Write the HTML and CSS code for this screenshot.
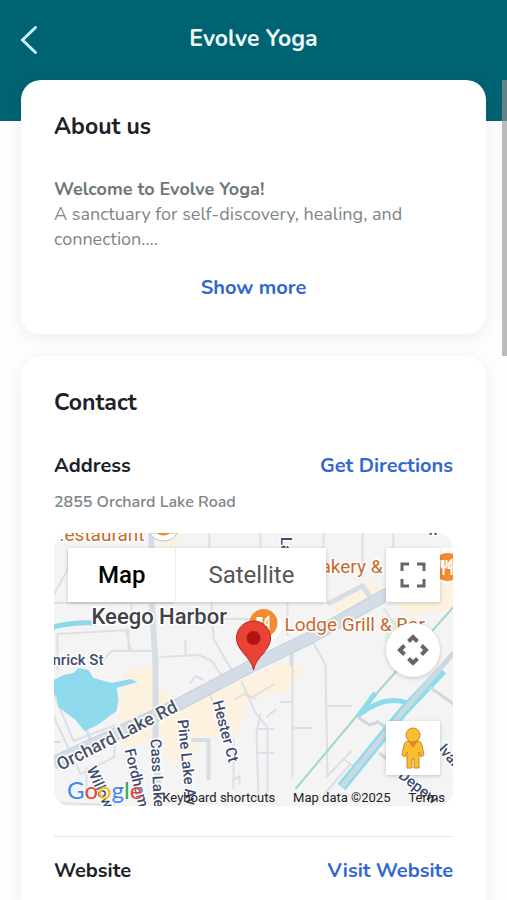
FILE: index.html
```
<!DOCTYPE html>
<html lang="en">
<head>
  <meta charset="UTF-8">
  <meta name="viewport" content="width=device-width, initial-scale=1.0">
  <title>Evolve Yoga</title>
  <link rel="stylesheet" href="styles.css">
</head>
<body>

  <header class="topbar">
    <button class="back" type="button" aria-label="Back">
      <svg width="18" height="30" viewBox="0 0 18 30"><path d="M15.500 2.500 2.500 15l13 12.500"/></svg>
    </button>
    <h1>Evolve Yoga</h1>
  </header>

  <main class="content">
    <section class="card">
      <h2>About us</h2>
      <p class="about"><strong>Welcome to Evolve Yoga!</strong>A sanctuary for self-discovery, healing, and connection....</p>
      <button class="link show-more" type="button">Show more</button>
    </section>

    <section class="card">
      <h2>Contact</h2>
      <div class="row">
        <h3>Address</h3>
        <a class="link" href="#directions">Get Directions</a>
      </div>
      <p class="address">2855 Orchard Lake Road</p>

      <div class="map">
        <svg class="map-art" viewBox="0 0 400 273" preserveAspectRatio="xMidYMid slice">
          <rect width="400" height="273" fill="#f4f4f5"/>

          <!-- commercial areas -->
          <g fill="#fcf2df">
            <path d="M74 136 103 132 100 149 118 165 122 180 75 201 64 186 68 162z"/>
            <path d="M63 190 198 143 227 129 252 134 234 158 195 168 184 202 146 203 140 230 112 228 108 206 70 215z"/>
            <path d="M112 0h14v14h-14zM278 66l41-20 12 14-46 26zM335 45l52-22 13 2v52l-45 6-24-22z"/>
          </g>
          <path d="M335 85h12l-3 20-14 4z" fill="#dcf3e2"/>

          <!-- side streets -->
          <g fill="none" stroke="#dce0e6" stroke-width="2">
            <path d="M15 15v20L0 62M0 70h120M78 15v72M0 183l27 58 34-17v-24M4 137V101l71-4v21H58l-8 9M72 95l5 22M102 118h-44M106 124l40-2 12 6 14 20M132 107v16M158 68l2 38 20 34M160 86h40M156 0v15M207 0v15M234 68v35M270 0v43M309 0v45M340 0v15"/>
            <path d="M0 160l20 48 42-16M0 209h8M33 258v-24M0 270l62 2M136 151l6-8 8 4M181 167l9-6 13 5M188 148l14 32 12 14v76M207 180l-4 20 2 66M205 196h16M205 220h16M199 164l22-13M213 184l10-8M239 120v124M226 169h13M239 195h20M154 155l8 20M140 206h16M180 206v50M180 247l6-4v8"/>
            <path d="M260 110l12 22 2 110M274 173h24M272 245l26-27M290 226l15 11M270 262l26-30M330 75l14 20"/>
          </g>
          <g fill="none" stroke="#d7dde4" stroke-width="6">
            <path d="M98 0v65l4 65v80l4 63"/>
            <path d="M138 207h17v40M238 115v18" stroke-width="4"/>
            <path d="M274 71l35-18 12 17" stroke-width="5"/>
            <path d="M15 152l23 57" stroke-width="3"/>
          </g>

          <!-- Orchard Lake Road -->
          <path d="M0 230 122 173 196 134 256 105 330 63 400 30" fill="none" stroke="#c3cfda" stroke-width="13"/>
          <path d="M0 230 122 173 196 134 256 105 330 63 400 30" fill="none" stroke="#d4dde7" stroke-width="11"/>

          <!-- water -->
          <path d="M0 147 10 142 20 140 25 135 35 137 40 145 58 150 77 146 84 149 63 155 65 166 63 178 44 192 31 198 22 187 5 174 3 164 0 160z" fill="#8fd9ed"/>
          <path d="M0 94q20-5 42-4" fill="none" stroke="#8dd8e8" stroke-width="5"/>
          <path d="M400 74 304 182 242 256" fill="none" stroke="#a6d8bd" stroke-width="2"/>
          <g fill="none" stroke="#8edbeb">
            <path d="M288 254 349 179 389 137" stroke-width="10"/>
            <path d="M304 184l18-24M308 180q24-18 46-10" stroke-width="5"/>
          </g>
          <path d="M288 254 349 179 400 120" fill="none" stroke="#cbd9e3" stroke-width="5"/>
          <path d="M304 184l12 8 8-3 8 5M326 220l14 12M376 154l24 17" fill="none" stroke="#d0d7de" stroke-width="3"/>

          <!-- places -->
          <g class="pin-place">
            <path d="M197 97a16 16 0 1 1 28 5l-13 11-11-11z" fill="#fff"/>
            <circle cx="210" cy="90" r="14" fill="#f58b2e"/>
            <path d="M204 84v5q0 2 2 2t2-2v-5M206 84v13M215 97V84q-4 2-3 8h3" stroke="#fff" stroke-width="2" fill="none"/>
            <path d="M383 45 394 52 400 48V15H386z" fill="#fff"/>
            <circle cx="394" cy="34" r="14" fill="#f58b2e"/>
            <path d="M388 27v6q0 2 2 2t3-2v-6M390 27v15M398 42V27q-3 2-3 8h3" stroke="#fff" stroke-width="2" fill="none"/>
            <path d="M96 0q5 8 14 8t14-8z" fill="#fff" stroke="#b9bec3"/>
            <path d="M103 0q7 5 14 0z" fill="#f58b2e"/>
          </g>

          <g class="label food">
            <text x="6" y="8">.estaurant</text>
            <text x="267" y="40">akery &amp;</text>
            <text x="231" y="98">Lodge Grill &amp; Bar</text>
          </g>
          <text class="label town" x="38" y="91">Keego Harbor</text>
          <text class="label major" transform="translate(7 238) rotate(-27)">Orchard Lake Rd</text>
          <g class="label street">
            <text x="-1" y="132">nrick St</text>
            <text transform="translate(33 236) rotate(66)">Willow</text>
            <text transform="translate(71 217) rotate(76)">Fordham</text>
            <text transform="translate(97 206) rotate(87)">Cass Lake Rd</text>
            <text transform="translate(124 187) rotate(84)">Pine Lake Ave</text>
            <text transform="translate(159 169) rotate(75)">Hester Ct</text>
            <text transform="translate(227 4) rotate(90)">Lake</text>
            <text transform="translate(344 244) rotate(38)">Depew</text>
            <text transform="translate(384 217) rotate(48)">lvania</text>
            <text x="374" y="2">w</text>
          </g>

          <!-- marker -->
          <path d="M200 137C198 124 183 118 183 105a17 17 0 0 1 34 0C217 118 202 124 200 137z" fill="#ea4335" stroke="#b7271f"/>
          <circle cx="200" cy="105" r="7" fill="#b31412"/>
        </svg>

        <div class="map-type">
          <button class="active" type="button">Map</button>
          <button type="button">Satellite</button>
        </div>

        <div class="map-tools">
          <button type="button" aria-label="Toggle fullscreen">
            <svg width="26" height="26" viewBox="0 0 26 26" fill="none" stroke="#666" stroke-width="3"><path d="M2 9V2h7M17 2h7v7M24 17v7h-7M9 24H2v-7"/></svg>
          </button>
          <button class="round" type="button" aria-label="Map camera controls">
            <svg width="32" height="32" viewBox="0 0 32 32" fill="none" stroke="#666" stroke-width="4"><path d="M11.500 7.500 16 3 20.500 7.500M24.500 11.500 29 16 24.500 20.500M20.500 24.500 16 29 11.500 24.500M7.500 20.500 3 16 7.500 11.500"/></svg>
          </button>
          <button class="pegman" type="button" aria-label="Street View">
            <svg width="24" height="42" viewBox="0 0 24 42" stroke="#c48a2c"><path d="M7 14h10q3 0 4 4l2 10-3 2-2-5v16h-5v-9h-2v9H6V25l-2 5-3-2 2-10q1-4 4-4z" fill="#fbbc2d"/><path d="M7 14h10l-5 7z" fill="#e8812c" stroke="none"/><circle cx="12" cy="8" r="7" fill="#fbbc2d"/></svg>
          </button>
        </div>

        <div class="map-footer">
          <a class="google" href="#google" aria-label="Google"><span class="b">G</span><span class="r">o</span><span class="y">o</span><span class="b">g</span><span class="g">l</span><span class="r">e</span></a>
          <button type="button">Keyboard shortcuts</button>
          <span>Map data ©2025</span>
          <a href="#terms">Terms</a>
        </div>
      </div>

      <div class="row website">
        <h3>Website</h3>
        <a class="link" href="#website">Visit Website</a>
      </div>
    </section>
  </main>

  <div class="scroll-thumb"></div>

</body>
</html>
```
FILE: styles.css
```
* {
  box-sizing: border-box;
}

body {
  margin: 0;
  height: 100vh;
  overflow: hidden;
  background: #fefefe;
  color: #202124;
  font-family: Nunito, "Open Sans", sans-serif;
}

h1, h2, h3, p {
  margin: 0;
}

button {
  padding: 0;
  border: 0;
  background: none;
  font: inherit;
  color: inherit;
  cursor: pointer;
}

a {
  text-decoration: none;
  color: inherit;
}

svg {
  display: block;
}

.topbar {
  display: grid;
  grid-template-columns: 24px 1fr 24px;
  align-items: center;
  height: 121px;
  padding: 0 20px 41px;
  background: #006371;
  color: #effbfc;
}

.topbar h1 {
  font-size: 23px;
  line-height: 28px;
  font-weight: 700;
  text-align: center;
  padding-bottom: 2px;
}

.back path {
  fill: none;
  stroke: #c5f3f7;
  stroke-width: 3;
  stroke-linecap: round;
}

.content {
  display: flex;
  flex-direction: column;
  gap: 22px;
  margin-top: -41px;
  padding: 0 21px;
}

.card {
  padding: 33px 33px 32px;
  border-radius: 20px;
  background: #fff;
  box-shadow: 0 4px 18px rgba(40, 40, 90, 0.08);
}

.card h2 {
  margin-bottom: 35px;
  font-size: 23px;
  line-height: 28px;
  font-weight: 700;
}

.card h3 {
  font-size: 20px;
  line-height: 28px;
  font-weight: 700;
}

.about {
  margin-bottom: 22px;
  font-size: 18px;
  line-height: 25px;
  color: #7c8587;
}

.about strong {
  display: block;
  line-height: 26px;
  font-weight: 700;
  color: #6c777a;
}

.link {
  font-size: 20px;
  line-height: 28px;
  font-weight: 700;
  color: #3367d1;
}

.show-more {
  display: block;
  margin: 0 auto;
}

.row {
  display: flex;
  justify-content: space-between;
}

.address {
  margin: 10px 0 19px;
  font-size: 16px;
  line-height: 24px;
  font-weight: 600;
  color: #7a8488;
}

.map {
  position: relative;
  height: 273px;
  border-radius: 16px;
  overflow: hidden;
  font-family: Roboto, sans-serif;
}

.map-art {
  width: 100%;
  height: 100%;
}

.label {
  paint-order: stroke;
  stroke: #fff;
  stroke-width: 3px;
  stroke-linejoin: round;
}

.food {
  font-size: 19px;
  fill: #c9692c;
}

.town {
  font-size: 22px;
  font-weight: 500;
  fill: #3f4246;
}

.major {
  font-size: 18px;
  font-weight: 500;
  fill: #4b5262;
}

.street {
  font-size: 15px;
  font-weight: 500;
  fill: #3d4b70;
}

.map-type {
  position: absolute;
  top: 15px;
  left: 14px;
  display: flex;
  background: #fff;
  box-shadow: 0 1px 4px rgba(0, 0, 0, 0.2);
  font-size: 24px;
  color: #565656;
}

.map-type button {
  height: 54px;
  padding: 0 32px;
}

.map-type .active {
  padding: 0 30px;
  border-right: 1px solid #eee;
  font-weight: 500;
  color: #000;
}

.map-tools {
  position: absolute;
  top: 15px;
  right: 13px;
  bottom: 31px;
  display: flex;
  flex-direction: column;
  gap: 21px;
}

.map-tools button {
  display: grid;
  place-items: center;
  width: 54px;
  height: 54px;
  background: #fff;
  box-shadow: 0 1px 4px rgba(0, 0, 0, 0.2);
}

.map-tools .round {
  border-radius: 50%;
}

.map-tools .pegman {
  margin-top: auto;
}

.map-footer {
  position: absolute;
  left: 13px;
  right: 8px;
  bottom: 0;
  display: flex;
  align-items: flex-end;
  gap: 18px;
  font-size: 13px;
  line-height: 16px;
  color: #222;
  white-space: nowrap;
}

.google {
  margin-right: auto;
  font-family: "Product Sans", Lato, sans-serif;
  font-size: 24px;
  line-height: 32px;
  text-shadow: 0 0 2px #fff;
}

.google .b { color: #4285f4; }
.google .r { color: #ea4335; }
.google .y { color: #fbbc05; }
.google .g { color: #34a853; }

.website {
  margin-top: 30px;
  padding-top: 20px;
  border-top: 1px solid #e2e4e6;
}

.scroll-thumb {
  position: fixed;
  top: 80px;
  right: 0;
  width: 5px;
  height: 276px;
  background: rgba(150, 150, 150, 0.65);
}
```
